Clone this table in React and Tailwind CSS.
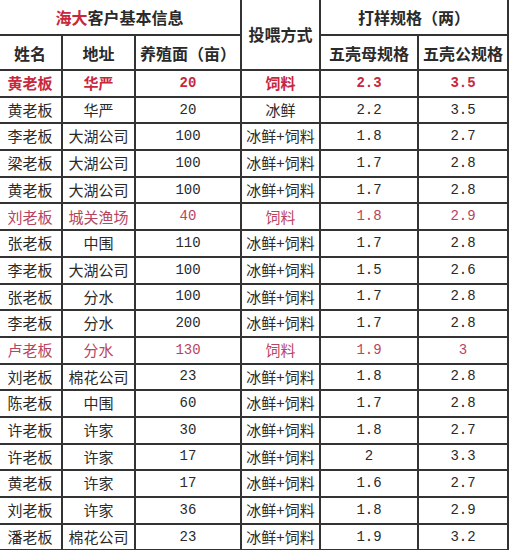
import React from "react";

const rows = [
  { name: "黄老板", addr: "华严", area: "20", feed: "饲料", mom: "2.3", dad: "3.5", tone: "bold" },
  { name: "黄老板", addr: "华严", area: "20", feed: "冰鲜", mom: "2.2", dad: "3.5" },
  { name: "李老板", addr: "大湖公司", area: "100", feed: "冰鲜+饲料", mom: "1.8", dad: "2.7" },
  { name: "梁老板", addr: "大湖公司", area: "100", feed: "冰鲜+饲料", mom: "1.7", dad: "2.8" },
  { name: "黄老板", addr: "大湖公司", area: "100", feed: "冰鲜+饲料", mom: "1.7", dad: "2.8" },
  { name: "刘老板", addr: "城关渔场", area: "40", feed: "饲料", mom: "1.8", dad: "2.9", tone: "pink" },
  { name: "张老板", addr: "中围", area: "110", feed: "冰鲜+饲料", mom: "1.7", dad: "2.8" },
  { name: "李老板", addr: "大湖公司", area: "100", feed: "冰鲜+饲料", mom: "1.5", dad: "2.6" },
  { name: "张老板", addr: "分水", area: "100", feed: "冰鲜+饲料", mom: "1.7", dad: "2.8" },
  { name: "李老板", addr: "分水", area: "200", feed: "冰鲜+饲料", mom: "1.7", dad: "2.8" },
  { name: "卢老板", addr: "分水", area: "130", feed: "饲料", mom: "1.9", dad: "3", tone: "pink" },
  { name: "刘老板", addr: "棉花公司", area: "23", feed: "冰鲜+饲料", mom: "1.8", dad: "2.8" },
  { name: "陈老板", addr: "中围", area: "60", feed: "冰鲜+饲料", mom: "1.7", dad: "2.8" },
  { name: "许老板", addr: "许家", area: "30", feed: "冰鲜+饲料", mom: "1.8", dad: "2.7" },
  { name: "许老板", addr: "许家", area: "17", feed: "冰鲜+饲料", mom: "2", dad: "3.3" },
  { name: "黄老板", addr: "许家", area: "17", feed: "冰鲜+饲料", mom: "1.6", dad: "2.7" },
  { name: "刘老板", addr: "许家", area: "36", feed: "冰鲜+饲料", mom: "1.8", dad: "2.9" },
  { name: "潘老板", addr: "棉花公司", area: "23", feed: "冰鲜+饲料", mom: "1.9", dad: "3.2" },
];

const cell = "border-2 border-[#333] text-center align-middle p-0 whitespace-nowrap";
// numbers in the sheet use a narrow monospaced face
const num = "font-['Liberation_Mono',monospace] text-[14px]";

export default function App() {
  return (
    <div
      className="w-[514px] h-[550px] overflow-hidden bg-white"
      style={{ fontFamily: '"Noto Sans CJK SC", "Noto Sans", sans-serif' }}
    >
      <table className="table-fixed border-collapse w-[509px] -ml-[1px] -mt-[1px] text-[15px] text-[#2a2a2a]">
        <colgroup>
          <col className="w-[63px]" />
          <col className="w-[73px]" />
          <col className="w-[106px]" />
          <col className="w-[79px]" />
          <col className="w-[98px]" />
          <col className="w-[90px]" />
        </colgroup>
        <thead>
          <tr className="h-[36px]">
            <th colSpan={3} className={`${cell} border-l-0 border-t-0 text-[16px] font-bold`}>
              <span className="text-[#c8283c]">海大</span>客户基本信息
            </th>
            <th rowSpan={2} className={`${cell} border-t-0 text-[16px] font-bold`}>投喂方式</th>
            <th colSpan={2} className={`${cell} border-t-0 text-[16px] font-bold`}>打样规格（两）</th>
          </tr>
          <tr className="h-[35px]">
            <th className={`${cell} border-l-0 text-[16px] font-bold`}>姓名</th>
            <th className={`${cell} text-[16px] font-bold`}>地址</th>
            <th className={`${cell} text-[16px] font-bold`}>养殖面（亩）</th>
            <th className={`${cell} text-[16px] font-bold`}>五壳母规格</th>
            <th className={`${cell} text-[16px] font-bold`}>五壳公规格</th>
          </tr>
        </thead>
        <tbody>
          {rows.map((r, i) => {
            const tone =
              r.tone === "bold"
                ? "text-[#c8283c] font-bold"
                : r.tone === "pink"
                ? "text-[#b84560]"
                : "";
            return (
              <tr key={i} className="h-[26.7px]">
                <td className={`${cell} border-l-0 ${tone}`}>{r.name}</td>
                <td className={`${cell} ${tone}`}>{r.addr}</td>
                <td className={`${cell} ${num} ${tone}`}>{r.area}</td>
                <td className={`${cell} ${tone}`}>{r.feed}</td>
                <td className={`${cell} ${num} ${tone}`}>{r.mom}</td>
                <td className={`${cell} ${num} ${tone}`}>{r.dad}</td>
              </tr>
            );
          })}
        </tbody>
      </table>
    </div>
  );
}
